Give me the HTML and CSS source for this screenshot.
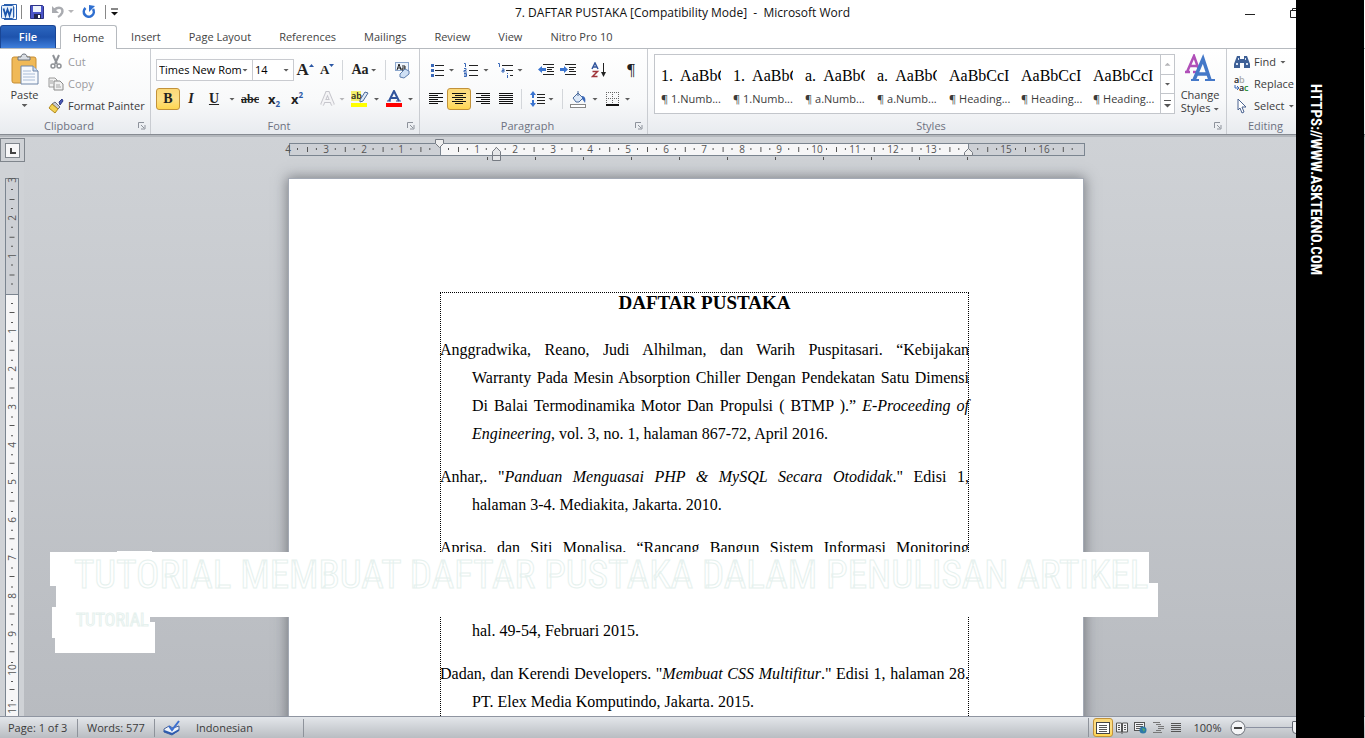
FILE: index.html
```html
<!DOCTYPE html>
<html lang="id">
<head>
<meta charset="utf-8">
<title>7. DAFTAR PUSTAKA</title>
<link rel="stylesheet" href="styles.css">
</head>
<body>
<div class="app">
  <header class="titlebar">
    <div class="quick">
      <svg class="word-logo" width="16" height="16" viewBox="0 0 16 16"><path d="M3 .5h12.500v15H3" fill="#fff" stroke="#2a5fae"/><path d="M12 4h2M12 6h2M12 8h2M12 10h2M12 12h2" stroke="#7fa3d6"/><rect x=".5" y="1.500" width="12" height="13" rx="1" fill="#e6f0fb" stroke="#2a5fae"/><path d="M2.500 4.500l2 7 2-6 2 6 2-7" fill="none" stroke="#1b55ab" stroke-width="1.800"/></svg>
      <span class="bar"></span>
      <button class="q-btn" aria-label="Save"><svg width="14" height="14" viewBox="0 0 14 14"><path d="M.5 .5h12l1 1v12H.5z" fill="#4a55c8" stroke="#2c3388"/><rect x="3" y="1" width="8" height="6" fill="#eef3fb"/><rect x="4" y="9" width="7" height="5" fill="#20254f"/><rect x="8" y="10" width="2" height="3" fill="#fff"/></svg></button>
      <button class="q-btn" aria-label="Undo"><svg width="14" height="14" viewBox="0 0 14 14"><path d="M3 5c5-4 10-2 8 3-1 2-2 3-4 4" fill="none" stroke="#a9abb0" stroke-width="2.500"/><path d="M1 1v7h7z" fill="#a9abb0"/></svg></button>
      <i class="caret light"></i>
      <button class="q-btn redo" aria-label="Repeat"><svg width="14" height="14" viewBox="0 0 14 14"><path d="M3.500 3a5 5 0 1 0 7.500 1" fill="none" stroke="#2f6fd0" stroke-width="2.600"/><path d="M7 0v7l6-6z" fill="#2f6fd0"/></svg></button>
      <span class="bar"></span>
      <button class="q-btn more" aria-label="Customize"><svg width="9" height="8" viewBox="0 0 9 8"><path d="M1 1h7" stroke="#111"/><path d="M1 4h7L4.500 7.500z" fill="#111"/></svg></button>
    </div>
    <h1 class="title">7. DAFTAR PUSTAKA [Compatibility Mode] &nbsp;-&nbsp; Microsoft Word</h1>
    <div class="win-btns">
      <button aria-label="Minimize"><svg width="12" height="12" viewBox="0 0 12 12"><path d="M1 7.500h10" stroke="#222"/></svg></button>
      <button aria-label="Restore"><svg width="12" height="12" viewBox="0 0 12 12"><path d="M.5 3.500h8v7h-8zM2.500 3.500v-2h8v7h-2" fill="none" stroke="#222"/></svg></button>
      <button aria-label="Close"><svg width="12" height="12" viewBox="0 0 12 12"><path d="M1 1l10 10M11 1L1 11" stroke="#222"/></svg></button>
    </div>
  </header>

  <nav class="tabs">
    <button class="tab file">File</button>
    <button class="tab active">Home</button>
    <button class="tab">Insert</button>
    <button class="tab">Page Layout</button>
    <button class="tab">References</button>
    <button class="tab">Mailings</button>
    <button class="tab">Review</button>
    <button class="tab">View</button>
    <button class="tab">Nitro Pro 10</button>
  </nav>

  <div class="ribbon">
    <section class="group clipboard">
      <div class="g-body">
        <button class="big paste">
          <svg width="30" height="32" viewBox="0 0 30 32"><rect x="2" y="4" width="24" height="26" rx="2" fill="#f0b957" stroke="#c68d33"/><path d="M8 7V4h3c0-4 6-4 6 0h3v3z" fill="#d9dde3" stroke="#6d747e"/><path d="M11 13h12l5 5v13H11z" fill="#f6f9fd" stroke="#6f86a8"/><path d="M23 13v5h5" fill="#cddcf0" stroke="#6f86a8"/><path d="M13 18h8M13 21h12M13 24h12M13 27h12" stroke="#a9bcd6"/></svg>
          <span>Paste</span><i class="caret"></i>
        </button>
        <div class="stack">
          <button class="row-btn dim"><svg width="16" height="16" viewBox="0 0 16 16"><path d="M5 1l4 9M11 1l-4 9" stroke="#8f9297" stroke-width="2"/><circle cx="5" cy="12" r="2" fill="none" stroke="#8f9297" stroke-width="1.500"/><circle cx="11" cy="12" r="2" fill="none" stroke="#8f9297" stroke-width="1.500"/></svg>Cut</button>
          <button class="row-btn dim"><svg width="16" height="16" viewBox="0 0 16 16"><path d="M1 2h6l2 2v7H1z" fill="#f1f1f1" stroke="#9a9a9a"/><path d="M6 5h6l3 3v6H6z" fill="#f1f1f1" stroke="#8a8a8a"/><path d="M8 9h4M8 11h5M2 5h3M2 7h3" stroke="#a5a5a5"/></svg>Copy</button>
          <button class="row-btn"><svg width="16" height="16" viewBox="0 0 16 16"><path d="M11 4l3-3 1 2-3 4z" fill="#4a5ab8" stroke="#2d3a86"/><path d="M7 4l5 5-2 2-6-5z" fill="#c9ccd2" stroke="#6c6f78"/><path d="M4 6l6 5-3 4-6-5z" fill="#f2d254" stroke="#b38a1d"/></svg>Format Painter</button>
        </div>
      </div>
      <footer class="g-foot"><span>Clipboard</span><button class="launch" aria-label="Clipboard options"><svg width="8" height="8" viewBox="0 0 8 8"><path d="M.5 6V.5H6M3 3l3 3M7 3v4H3" fill="none" stroke="#8d929b"/></svg></button></footer>
    </section>

    <section class="group font">
      <div class="g-body col">
        <div class="tools">
          <label class="combo face"><select aria-label="Font"><option>Times New Rom</option></select><i class="caret"></i></label>
          <label class="combo size"><select aria-label="Font size"><option>14</option></select><i class="caret"></i></label>
          <button class="t w22 serif grow" aria-label="Grow font">A<svg width="5" height="4" viewBox="0 0 5 4"><path d="M0 3h5L2.500 0z" fill="#2b57a5"/></svg></button>
          <button class="t w22 serif shrink" aria-label="Shrink font">A<svg width="5" height="4" viewBox="0 0 5 4"><path d="M0 0h5L2.500 3z" fill="#2b57a5"/></svg></button>
          <span class="sep"></span>
          <button class="t w34 serif case">Aa<i class="caret"></i></button>
          <span class="sep"></span>
          <button class="t w24" aria-label="Clear formatting"><svg width="18" height="18" viewBox="0 0 18 18"><rect x="2.500" y="1.500" width="13" height="8" fill="#eef4fb" stroke="#8ba6cc"/><path d="M4 9l2-6 2 6M5 7h3M9 5h3v4H9V7h3" fill="none" stroke="#222"/><path d="M7 13l5-5 4 2v3l-5 4-4-1z" fill="#cfe0f5" stroke="#5f7fae"/></svg></button>
        </div>
        <div class="tools">
          <button class="t w24 serif bold on">B</button>
          <button class="t w22 serif ital">I</button>
          <button class="t w24 serif under">U</button>
          <button class="t w12" aria-label="Underline style"><i class="caret"></i></button>
          <button class="t w24 serif strike">abc</button>
          <button class="t w24 xx">x<sub>2</sub></button>
          <button class="t w22 xx">x<sup>2</sup></button>
          <span class="sep"></span>
          <button class="t w32 tight" aria-label="Text effects"><svg width="17" height="18" viewBox="0 0 17 18"><path d="M3 15L8 3h1l5 12M5 11h7" fill="none" stroke="#c6c6cc" stroke-width="4"/><path d="M3 15L8 3h1l5 12M5 11h7" fill="none" stroke="#f4f4f6" stroke-width="2"/></svg><i class="caret light"></i></button>
          <button class="t w34" aria-label="Highlight"><svg width="18" height="18" viewBox="0 0 18 18"><rect x="0" y="1" width="10" height="10" fill="#f4f06a"/><text x="0" y="9" class="tiny">ab</text><path d="M9 10l5-8 3 1-5 8-3 1z" fill="#dfe9f6" stroke="#4c6a99"/><rect y="13" width="16" height="4" fill="#ffff00"/></svg><i class="caret"></i></button>
          <button class="t w34" aria-label="Font color"><svg width="18" height="18" viewBox="0 0 18 18"><path d="M4 11L9 1l5 10M6 8h6" fill="none" stroke="#31549c" stroke-width="2"/><path d="M2 11h4M11 11h5" stroke="#31549c"/><rect x="1" y="13" width="16" height="4" fill="#ff0000"/></svg><i class="caret"></i></button>
        </div>
      </div>
      <footer class="g-foot"><span>Font</span><button class="launch" aria-label="Font options"><svg width="8" height="8" viewBox="0 0 8 8"><path d="M.5 6V.5H6M3 3l3 3M7 3v4H3" fill="none" stroke="#8d929b"/></svg></button></footer>
    </section>

    <section class="group para">
      <div class="g-body col">
        <div class="tools">
          <button class="t w34" aria-label="Bullets"><svg width="14" height="16" viewBox="0 0 14 16"><path d="M5 3.500h9M5 8.500h9M5 13.500h9" stroke="#222"/><path d="M1 2h3v3H1zM1 7h3v3H1zM1 12h3v3H1z" fill="#3a68b8"/></svg><i class="caret"></i></button>
          <button class="t w34" aria-label="Numbering"><svg width="15" height="16" viewBox="0 0 15 16"><path d="M6 3.500h9M6 8.500h9M6 13.500h9" stroke="#222"/><path d="M1 1.500h1.500V5M1 6.500h2v2H1v1.500h3M1 11.500h2.500v3H1M1 13h2" fill="none" stroke="#3a68b8"/></svg><i class="caret"></i></button>
          <button class="t w34 tight" aria-label="Multilevel list"><svg width="17" height="16" viewBox="0 0 17 16"><path d="M5 3.500h11M9 8.500h7M13 13.500h3" stroke="#222"/><path d="M1 1.500h1.500V5M5 7h2v3H5V8.500h2M10.500 11v1M10.500 13v3" fill="none" stroke="#3a68b8"/></svg><i class="caret"></i></button>
          <span class="sep"></span>
          <button class="t w22" aria-label="Decrease indent"><svg width="16" height="14" viewBox="0 0 16 14"><path d="M5 1.500h11M9 4.500h7M9 6.500h5M9 8.500h7M5 11.500h11" stroke="#222"/><path d="M0 6.500L4 3v2h4v3H4v2z" fill="#3a74d0"/></svg></button>
          <button class="t w22" aria-label="Increase indent"><svg width="16" height="14" viewBox="0 0 16 14"><path d="M5 1.500h11M9 4.500h7M9 6.500h5M9 8.500h7M5 11.500h11" stroke="#222"/><path d="M8 6.500L4 3v2H0v3h4v2z" fill="#3a74d0"/></svg></button>
          <span class="sep"></span>
          <button class="t w24" aria-label="Sort"><svg width="16" height="16" viewBox="0 0 16 16"><path d="M1 7l3-6 3 6M2 5h4" fill="none" stroke="#31549c" stroke-width="1.500"/><path d="M1.500 9.500h5l-5 5h5" fill="none" stroke="#a0343a" stroke-width="1.500"/><path d="M12.500 1v11" stroke="#222"/><path d="M10 10h5l-2.500 5z" fill="#222"/></svg></button>
          <span class="sep"></span>
          <button class="t w24 serif pil">¶</button>
        </div>
        <div class="tools">
          <button class="t w22" aria-label="Align left"><svg width="14" height="12" viewBox="0 0 14 12"><path d="M0 .5h14M0 2.500h9M0 4.500h14M0 6.500h9M0 8.500h14M0 10.500h9" stroke="#111"/></svg></button>
          <button class="t w24 on" aria-label="Center"><svg width="14" height="12" viewBox="0 0 14 12"><path d="M0 .5h14M3 2.500h8M0 4.500h14M3 6.500h8M0 8.500h14M3 10.500h8" stroke="#111"/></svg></button>
          <button class="t w24" aria-label="Align right"><svg width="14" height="12" viewBox="0 0 14 12"><path d="M0 .5h14M5 2.500h9M0 4.500h14M5 6.500h9M0 8.500h14M5 10.500h9" stroke="#111"/></svg></button>
          <button class="t w22" aria-label="Justify"><svg width="14" height="12" viewBox="0 0 14 12"><path d="M0 .5h14M0 2.500h14M0 4.500h14M0 6.500h14M0 8.500h14M0 10.500h14" stroke="#111"/></svg></button>
          <span class="sep"></span>
          <button class="t w32 tight" aria-label="Line spacing"><svg width="15" height="16" viewBox="0 0 15 16"><path d="M7 3.500h8M7 6.500h8M7 9.500h8M7 12.500h8" stroke="#222"/><path d="M3 0l3 4H4v3H2V4H0zM3 16l3-4H4V9H2v3H0z" fill="#3a74d0"/></svg><i class="caret"></i></button>
          <span class="sep"></span>
          <button class="t w34" aria-label="Shading"><svg width="17" height="17" viewBox="0 0 17 17"><path d="M3 7l5-5 5 5-4 4H6z" fill="#dce8f7" stroke="#4a6a9c"/><path d="M8 5V0" stroke="#4a6a9c"/><path d="M12 5c3 0 4 3 3 7-1-2-2-3-3-4z" fill="#3a68b8"/><rect x=".5" y="13.500" width="15" height="3" fill="#fff" stroke="#888"/></svg><i class="caret"></i></button>
          <button class="t w34" aria-label="Borders"><svg width="14" height="14" viewBox="0 0 14 14"><path d="M0 .5h13M0 6.500h13M.5 0v13M6.500 0v13M12.500 0v13" fill="none" stroke="#666" stroke-dasharray="1 1"/><path d="M0 13h13" stroke="#111" stroke-width="2"/></svg><i class="caret"></i></button>
        </div>
      </div>
      <footer class="g-foot"><span>Paragraph</span><button class="launch" aria-label="Paragraph options"><svg width="8" height="8" viewBox="0 0 8 8"><path d="M.5 6V.5H6M3 3l3 3M7 3v4H3" fill="none" stroke="#8d929b"/></svg></button></footer>
    </section>

    <section class="group styles">
      <div class="g-body">
        <div class="gallery">
          <button class="style"><b>1.&nbsp; AaBbCcI</b><span>¶ 1.Numb...</span></button>
          <button class="style"><b>1.&nbsp; AaBbCcI</b><span>¶ 1.Numb...</span></button>
          <button class="style"><b>a.&nbsp; AaBbCcI</b><span>¶ a.Numb...</span></button>
          <button class="style"><b>a.&nbsp; AaBbCcI</b><span>¶ a.Numb...</span></button>
          <button class="style"><b>AaBbCcI</b><span>¶ Heading...</span></button>
          <button class="style"><b>AaBbCcI</b><span>¶ Heading...</span></button>
          <button class="style"><b>AaBbCcI</b><span>¶ Heading...</span></button>
          <div class="g-scroll">
            <button aria-label="Previous styles"><i class="caret up light"></i></button>
            <button aria-label="Next styles"><i class="caret"></i></button>
            <button aria-label="More styles"><svg width="7" height="8" viewBox="0 0 7 8"><path d="M0 .5h7" stroke="#555"/><path d="M0 4h7L3.500 7.500z" fill="#555"/></svg></button>
          </div>
        </div>
        <button class="big change">
          <svg width="30" height="28" viewBox="0 0 30 28"><path d="M0 18h5M8 18h3M2 18L9 2l5 14M5 12h8" fill="none" stroke="#b04fb8" stroke-width="2.500"/><path d="M9 26L18 5l7 21M12 20h11" fill="none" stroke="#4478c8" stroke-width="3.500"/><path d="M6 26h8M20 26h10" stroke="#4478c8" stroke-width="2"/></svg>
          <span>Change</span><span>Styles <i class="caret"></i></span>
        </button>
      </div>
      <footer class="g-foot"><span>Styles</span><button class="launch" aria-label="Styles options"><svg width="8" height="8" viewBox="0 0 8 8"><path d="M.5 6V.5H6M3 3l3 3M7 3v4H3" fill="none" stroke="#8d929b"/></svg></button></footer>
    </section>

    <section class="group editing">
      <div class="g-body">
        <div class="stack">
          <button class="row-btn"><svg width="16" height="14" viewBox="0 0 16 14"><path d="M3 1h3v3h4V1h3l3 8v4h-6V8H6v5H0V9z" fill="#3d5f96"/><path d="M2 9h2M12 9h2M4 4h1M11 4h1" stroke="#d5e2f3" stroke-width="2"/></svg>Find<i class="caret"></i></button>
          <button class="row-btn"><svg width="16" height="16" viewBox="0 0 16 16"><text x="0" y="7" class="tiny">a</text><text x="5" y="7" class="tiny gray">b</text><text x="5" y="15" class="tiny">a</text><text x="10" y="15" class="tiny green">c</text><path d="M1 9v3h3M3 10l2 2-2 2" fill="none" stroke="#3a68b8"/></svg>Replace</button>
          <button class="row-btn"><svg width="16" height="16" viewBox="0 0 16 16"><path d="M4 1l8 8H8l2 5-2 1-2-5-2 2z" fill="#fff" stroke="#4a6390"/></svg>Select<i class="caret"></i></button>
        </div>
      </div>
      <footer class="g-foot"><span>Editing</span></footer>
    </section>
  </div>

  <main class="work">
    <aside class="v-side">
      <button class="tab-pick" aria-label="Tab stop"><svg width="15" height="15" viewBox="0 0 15 15"><rect x=".5" y=".5" width="14" height="14" fill="#f7f7f8" stroke="#7f858c"/><path d="M6 5v5h5" fill="none" stroke="#444" stroke-width="2"/></svg></button>
      <svg class="v-ruler" width="14" height="600" viewBox="0 0 14 600">
        <rect x=".5" y=".5" width="13" height="599" fill="#cdd0d5" stroke="#7b8590"/>
        <rect x="1" y="116" width="12" height="484" fill="#f6f6f7"/><path d="M0 116.500h14" stroke="#7b8590"/>
        <path d="M7 21V112M7 134V600" stroke="#555" stroke-width="5" stroke-dasharray="1 36.700"/>
        <path d="M7 11V112M7 125V600" stroke="#555" stroke-width="2" stroke-dasharray="1 17.900"/>
        <g class="nums">
          <text transform="translate(11 2) rotate(-90)">3</text><text transform="translate(11 40) rotate(-90)">2</text><text transform="translate(11 78) rotate(-90)">1</text>
          <text transform="translate(11 153) rotate(-90)">1</text><text transform="translate(11 191) rotate(-90)">2</text><text transform="translate(11 229) rotate(-90)">3</text><text transform="translate(11 267) rotate(-90)">4</text><text transform="translate(11 304) rotate(-90)">5</text><text transform="translate(11 342) rotate(-90)">6</text><text transform="translate(11 380) rotate(-90)">7</text><text transform="translate(11 418) rotate(-90)">8</text><text transform="translate(11 456) rotate(-90)">9</text><text transform="translate(11 492) rotate(-90)">10</text><text transform="translate(11 530) rotate(-90)">11</text>
        </g>
      </svg>
    </aside>
    <div class="canvas">
      <svg class="h-ruler" width="796" height="26" viewBox="0 0 796 26">
        <rect x="1.500" y="4.500" width="795" height="12" fill="#cdd0d5" stroke="#7b8590"/>
        <rect x="153" y="5" width="527" height="11" fill="#f6f6f7"/><path d="M152.500 4v12M680.500 4v12" stroke="#7b8590"/>
        <path d="M19 10.500H150M170 10.500H790" stroke="#555" stroke-width="5" stroke-dasharray="1 36.800"/>
        <path d="M9 10H150M160 10H790" stroke="#555" stroke-width="2" stroke-dasharray="1 17.900"/>
        <path d="M199 19.500H690" stroke="#555" stroke-width="3" stroke-dasharray="1 47"/>
        <g class="nums" transform="translate(-1 0)">
          <text x="1" y="14">4</text><text x="39" y="14">3</text><text x="77" y="14">2</text><text x="114" y="14">1</text>
          <text x="190" y="14">1</text><text x="228" y="14">2</text><text x="266" y="14">3</text><text x="303" y="14">4</text><text x="341" y="14">5</text><text x="379" y="14">6</text><text x="417" y="14">7</text><text x="455" y="14">8</text><text x="492" y="14">9</text><text x="530" y="14">10</text><text x="568" y="14">11</text><text x="606" y="14">12</text><text x="644" y="14">13</text><text x="719" y="14">15</text><text x="757" y="14">16</text>
        </g>
        <path d="M147.500 .5h8v4l-4 4-4-4z" fill="#eee" stroke="#777c84"/>
        <path d="M204.500 16.500v-4l4-4 4 4v4zM204.500 16.500h8v5h-8z" fill="#e6e7e9" stroke="#777c84"/>
        <path d="M676.500 16.500v-3l4-4 4 4v3z" fill="#eee" stroke="#777c84"/>
      </svg>
      <article class="page">
        <div class="text-area">
          <h2 class="doc-title">DAFTAR PUSTAKA</h2>
          <p class="entry"><span class="full">Anggradwika, Reano, Judi Alhilman, dan Warih Puspitasari. “Kebijakan</span> <span class="full">Warranty Pada Mesin Absorption Chiller Dengan Pendekatan Satu Dimensi</span> <span class="full">Di Balai Termodinamika Motor Dan Propulsi ( BTMP ).” <em>E-Proceeding of</em></span> <span><em>Engineering</em>, vol. 3, no. 1, halaman 867-72, April 2016.</span></p>
          <p class="entry"><span class="full">Anhar,. "<em>Panduan Menguasai PHP &amp; MySQL Secara Otodidak</em>." Edisi 1,</span> <span>halaman 3-4. Mediakita, Jakarta. 2010.</span></p>
          <p class="entry covered"><span class="full">Aprisa, dan Siti Monalisa. “Rancang Bangun Sistem Informasi Monitoring</span> <span class="last">hal. 49-54, Februari 2015.</span></p>
          <p class="entry"><span class="full">Dadan, dan Kerendi Developers. "<em>Membuat CSS Multifitur</em>." Edisi 1, halaman 28.</span> <span>PT. Elex Media Komputindo, Jakarta. 2015.</span></p>
        </div>
      </article>
    </div>
  </main>

  <footer class="status">
    <span class="s-page">Page: 1 of 3</span>
    <span class="s-words">Words: 577</span>
    <button class="s-proof" aria-label="Proofing"><svg width="18" height="16" viewBox="0 0 18 16"><path d="M1 9l5-3 4 2 6-2v4l-7 5-8-3z" fill="#eef3fa" stroke="#44609a"/><path d="M1 11l8 3 7-4" fill="none" stroke="#2f5cae" stroke-width="2"/><path d="M6 6l3 4 7-9" fill="none" stroke="#3b6fd0" stroke-width="2"/></svg></button>
    <span class="s-lang">Indonesian</span>
    <div class="s-right">
      <button class="view on" aria-label="Print layout"><svg width="14" height="12" viewBox="0 0 14 12"><rect x=".5" y=".5" width="13" height="11" fill="#fff" stroke="#444"/><path d="M3 3.500h8M3 5.500h8M3 7.500h8M3 9.500h8" stroke="#555"/></svg></button>
      <button class="view" aria-label="Reading"><svg width="12" height="12" viewBox="0 0 12 12"><path d="M.5 1h5v9h-5zM6.500 1h5v9h-5z" fill="#f2f3f5" stroke="#555"/><path d="M2 3.500h2M2 5.500h2M2 7.500h2M8 3.500h2M8 5.500h2M8 7.500h2M6 9v3" stroke="#555"/></svg></button>
      <button class="view" aria-label="Web layout"><svg width="13" height="12" viewBox="0 0 13 12"><rect x=".5" y=".5" width="10" height="8" fill="#f2f3f5" stroke="#555"/><path d="M2 2.500h7M2 4.500h7M2 6.500h4" stroke="#555"/><circle cx="9" cy="8" r="3.500" fill="#2e78a8"/><path d="M8 6l3 1-1 3z" fill="#5cae62"/></svg></button>
      <button class="view" aria-label="Outline"><svg width="11" height="11" viewBox="0 0 11 11"><path d="M0 .5h7M3 2.500h5M5 4.500h6M5 6.500h6M3 8.500h5M0 10.500h9" stroke="#777"/></svg></button>
      <button class="view" aria-label="Draft"><svg width="10" height="9" viewBox="0 0 10 9"><path d="M0 .5h10M0 2.500h10M0 4.500h10M0 6.500h10M0 8.500h10" stroke="#555"/></svg></button>
      <button class="zoom-val">100%</button>
      <button class="zoom-out" aria-label="Zoom out"><svg width="16" height="16" viewBox="0 0 16 16"><circle cx="8" cy="8" r="7" fill="#f4f5f7" stroke="#6b7078"/><path d="M4 8h8" stroke="#444" stroke-width="2"/></svg></button>
      <input class="zoom" type="range" min="0" max="100" value="50" aria-label="Zoom">
    </div>
  </footer>
</div>

<aside class="strip"><a href="#">HTTPS://WWW.ASKTEKNO.COM</a></aside>
<div class="banner"><p class="b-title">TUTORIAL MEMBUAT DAFTAR PUSTAKA DALAM PENULISAN ARTIKEL</p><p class="b-tag">TUTORIAL</p></div>
</body>
</html>
```
FILE: styles.css
```css
* { box-sizing: border-box; }
html, body { height: 100%; }
body { margin: 0; position: relative; overflow: hidden; font-family: "Open Sans", "Noto Sans", sans-serif; font-size: 11px; line-height: 16px; color: #3b3b3b; }
button { font: inherit; color: inherit; background: none; border: 0; padding: 0; margin: 0; }
svg { display: block; flex: none; }
h1, h2, p { margin: 0; }
.app { display: flex; flex-direction: column; height: 100%; background: #fff; }

.caret { display: inline-block; flex: none; width: 6px; height: 3px; background: #5c5c5c; clip-path: polygon(0 0, 100% 0, 50% 100%); }
.caret.light { background: #b5b5b8; }
.caret.up { clip-path: polygon(0 100%, 100% 100%, 50% 0); }

.titlebar { display: grid; grid-template-columns: 1fr auto 1fr; height: 25px; flex: none; }
.quick { display: flex; align-items: center; height: 23px; padding-left: 1px; }
.quick .bar { width: 1px; height: 14px; background: #888; margin: 0 4px; }
.q-btn { width: 21px; display: flex; justify-content: center; }
.q-btn.redo { margin-left: 2px; width: 25px; }
.q-btn.more { width: 9px; }
.title { font-size: 12px; font-weight: 400; line-height: 25px; color: #111; white-space: pre; }
.win-btns { display: flex; justify-content: flex-end; }
.win-btns button { width: 46px; display: flex; align-items: center; justify-content: center; }

.tabs { display: flex; height: 24px; flex: none; border-bottom: 1px solid #b6babf; }
.tab { padding: 0 14px; color: #444; white-space: nowrap; }
.tab.file { width: 56px; margin-right: 4px; color: #fff; font-weight: 600; background: linear-gradient(#2c66bf, #1e53ad 50%, #3f7fdc); border: 1px solid #1a4695; border-bottom: 0; border-radius: 3px 3px 0 0; }
.tab.active { background: #fff; border: 1px solid #b6babf; border-bottom: 0; border-radius: 3px 3px 0 0; height: 24px; padding: 0 12px; }

.ribbon { display: flex; height: 86px; flex: none; background: linear-gradient(#fff, #f8f9fa 60%, #e8ebef); border-bottom: 1px solid #868b92; }
.group { display: flex; flex-direction: column; flex: none; border-right: 1px solid #c9ccd1; }
.clipboard { width: 151px; }
.font { width: 269px; }
.para { width: 228px; }
.styles { width: 579px; }
.editing { width: 78px; }
.g-body { flex: 1; min-height: 0; display: flex; padding: 4px 5px 0; }
.g-body.col { flex-direction: column; gap: 7px; padding: 10px 5px 0; }
.g-foot { display: flex; flex: none; align-items: center; height: 16px; padding: 0; color: #6d7180; }
.g-foot span { flex: 1; text-align: center; }
.launch { width: 12px; }

.big { display: flex; flex-direction: column; align-items: center; line-height: 13px; }
.paste { width: 39px; gap: 3px; }
.change { width: 42px; margin-left: 4px; white-space: nowrap; }
.change svg { margin: 1px 0 6px; }
.change .caret { vertical-align: middle; }
.stack { display: flex; flex-direction: column; }
.clipboard .stack { margin-left: 4px; }
.row-btn { display: flex; flex: none; align-items: center; gap: 4px; height: 22px; margin-top: -2px; margin-bottom: 2px; white-space: nowrap; }
.row-btn.dim { color: #9a9a9e; }
.editing .g-body { padding-left: 7px; }

.tools { display: flex; align-items: center; height: 22px; }
.t { display: flex; flex: none; align-items: center; justify-content: center; gap: 5px; height: 22px; }
.t.case { gap: 2px; }
.t.tight { gap: 3px; }
.w12 { width: 12px; } .w22 { width: 22px; } .w24 { width: 24px; } .w32 { width: 32px; } .w34 { width: 34px; }
.sep { width: 1px; height: 20px; background: #d3d6da; margin: 0 4px; }
.on { background: linear-gradient(#fbd878, #fde089 50%, #ffd64f); border: 1px solid #c2923a; border-radius: 3px; }
.combo { display: flex; align-items: center; height: 22px; border: 1px solid #c9cbd0; background: #fff; padding-right: 4px; }
.combo select { appearance: none; flex: 1; min-width: 0; border: 0; background: none; padding: 0 0 0 2px; font: inherit; color: #000; }
.face { width: 99px; }
.size { width: 43px; border-left: 0; }
.serif { font-family: "Liberation Serif", serif; font-weight: 700; font-size: 14px; color: #222; }
.grow { font-size: 17px; gap: 0; }
.shrink { font-size: 13px; gap: 0; }
.grow svg, .shrink svg { align-self: flex-start; margin-top: 5px; }
.ital { font-style: italic; }
.under { text-decoration: underline; }
.strike { text-decoration: line-through; font-size: 12px; }
.pil { font-size: 17px; font-weight: 400; }
.xx { font-weight: 700; font-size: 13px; gap: 0; color: #222; }
.xx sub, .xx sup { font-size: 8px; line-height: 8px; color: #2b57a5; }
.xx sub { align-self: flex-end; padding-bottom: 2px; }
.xx sup { align-self: flex-start; padding-top: 3px; }
.tiny { font-family: "Open Sans", sans-serif; font-size: 9px; font-weight: 600; fill: #222; }
.tiny.gray { fill: #aaa; }
.tiny.green { fill: #1b8a2a; }

.gallery { display: flex; flex: none; height: 60px; margin: 1px 0 0 1px; border: 1px solid #c3c6cb; background: #fff; padding-left: 1px; }
.style { display: flex; flex-direction: column; width: 72px; padding: 11px 0 0 5px; text-align: left; white-space: nowrap; }
.style b { width: 60px; overflow: hidden; font: 16px/20px "Liberation Serif", serif; color: #000; }
.style span { margin-top: 5px; }
.g-scroll { display: flex; flex-direction: column; width: 14px; border-left: 1px solid #c3c6cb; }
.g-scroll button { flex: 1; display: flex; align-items: center; justify-content: center; }
.g-scroll button + button { border-top: 1px solid #c3c6cb; }

.work { display: flex; flex: 1; min-height: 0; overflow: hidden; background: linear-gradient(#cfd2d6, #b8bbc0); border-top: 2px solid #b3b7bc; }
.v-side { width: 24px; flex: none; background: #cfd2d6; }
.tab-pick { display: flex; align-items: center; justify-content: center; width: 25px; height: 24px; margin-top: 1px; border: 1px solid #7f858c; }
.v-ruler { margin: 16px 0 0 5px; }
.nums { font-size: 10px; fill: #555; text-anchor: middle; }
.canvas { flex: 1; padding: 2px 17px 0 0; display: flex; flex-direction: column; align-items: center; min-width: 0; }
.h-ruler { overflow: visible; }
.page { width: 796px; flex: none; height: 1123px; margin-top: 13px; padding: 113px 114px 0 151px; background: #fff; border: 1px solid #a3a9b4; box-shadow: 0 0 12px 1px rgba(70, 74, 80, .6); }
.text-area { height: 900px; outline: 1px dotted #000; outline-offset: -1px; font-family: "Liberation Serif", "Times New Roman", serif; font-size: 16px; line-height: 28px; color: #000; }
.doc-title { font-size: 19px; line-height: 22px; margin-bottom: 22px; text-align: center; }
.entry { padding-left: 32px; margin-bottom: 15px; }
.entry span { display: block; }
.entry span:first-child { margin-left: -32px; }
.entry .full { text-align-last: justify; white-space: nowrap; }
.covered .last { padding-top: 55px; }

.status { display: flex; align-items: center; flex: none; height: 22px; border-top: 1px solid #8f95a1; background: linear-gradient(#e3e6ea, #b9bdc2); white-space: nowrap; }
.status > span, .s-proof { height: 18px; line-height: 18px; border-right: 1px solid #8e939b; }
.s-page { width: 78px; padding-left: 8px; }
.s-words { width: 77px; padding-left: 9px; }
.status .s-proof { display: flex; align-items: center; width: 33px; padding-left: 8px; border: 0; }
.s-lang { width: 116px; padding-left: 8px; }
.s-right { display: flex; align-items: center; width: 277px; margin-left: auto; padding-left: 4px; border-left: 1px solid #8e939b; }
.view { display: flex; align-items: center; justify-content: center; width: 18px; height: 19px; }
.view.on { width: 20px; }
.zoom-val { width: 45px; }
.zoom { appearance: none; width: 100px; height: 16px; margin: 0; background: linear-gradient(#8a90a0, #8a90a0) center / 100% 1px no-repeat; }
.zoom::-webkit-slider-thumb { appearance: none; width: 9px; height: 13px; background: #f1f2f4; border: 1px solid #5f646d; border-radius: 1px 1px 4px 4px; }

.strip { position: absolute; top: 0; bottom: 0; right: 1px; width: 68px; background: #000; }
.strip a { position: absolute; top: 84px; left: 10px; writing-mode: vertical-rl; color: #fff; text-decoration: none; font: 700 15px/20px "Roboto Condensed", Roboto, sans-serif; white-space: nowrap; }
.banner { position: absolute; left: 50px; bottom: 85px; width: 1108px; height: 102px; padding: 4px 0 0 24px; background: #fff; color: #fff; font-family: "Roboto Condensed", Roboto, sans-serif; font-weight: 400; white-space: nowrap; -webkit-text-stroke: 1px #e6f1ee; clip-path: polygon(0 1px, 67px 1px, 67px 0, 102px 0, 102px 1px, 1099px 1px, 1099px 32px, 1108px 32px, 1108px 66px, 100px 66px, 100px 71px, 105px 71px, 105px 102px, 5px 102px, 5px 87px, 2px 87px, 2px 56px, 6px 56px, 6px 35px, 0 35px); }
.b-title { font-size: 39px; line-height: 40px; }
.b-tag { font-size: 18px; line-height: 20px; margin-top: 15px; padding-left: 2px; }
```
